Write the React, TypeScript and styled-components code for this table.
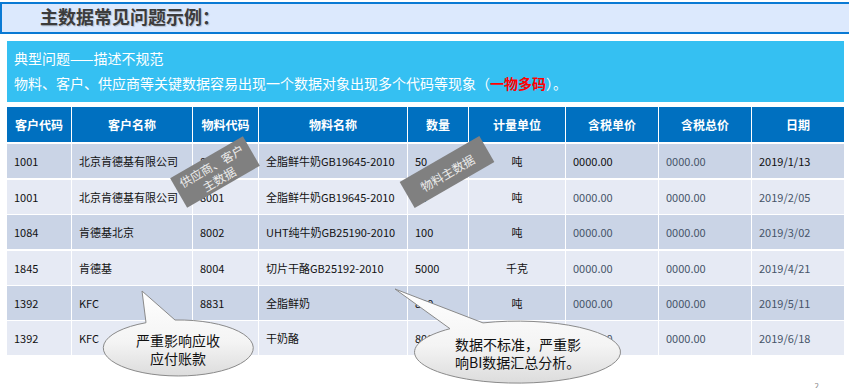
import styled, { createGlobalStyle } from "styled-components";

const GlobalStyle = createGlobalStyle`
  html, body {
    margin: 0;
    padding: 0;
    background: #ffffff;
  }
  body {
    font-family: "Noto Sans CJK SC", "Noto Sans", sans-serif;
  }
`;

type Row = {
  cells: string[];
  // indexes of cells drawn in the muted grey-blue
  muted: number[];
};

const headers = [
  "客户代码",
  "客户名称",
  "物料代码",
  "物料名称",
  "数量",
  "计量单位",
  "含税单价",
  "含税总价",
  "日期",
];

const rows: Row[] = [
  {
    cells: ["1001", "北京肯德基有限公司", "8001", "全脂鲜牛奶GB19645-2010", "50", "吨", "0000.00", "0000.00", "2019/1/13"],
    muted: [7],
  },
  {
    cells: ["1001", "北京肯德基有限公司", "8001", "全脂鲜牛奶GB19645-2010", "50", "吨", "0000.00", "0000.00", "2019/2/05"],
    muted: [6, 7, 8],
  },
  {
    cells: ["1084", "肯德基北京", "8002", "UHT纯牛奶GB25190-2010", "100", "吨", "0000.00", "0000.00", "2019/3/02"],
    muted: [6, 7, 8],
  },
  {
    cells: ["1845", "肯德基", "8004", "切片干酪GB25192-2010", "5000", "千克", "0000.00", "0000.00", "2019/4/21"],
    muted: [6, 7, 8],
  },
  {
    cells: ["1392", "KFC", "8831", "全脂鲜奶", "800", "吨", "0000.00", "0000.00", "2019/5/11"],
    muted: [6, 7, 8],
  },
  {
    cells: ["1392", "KFC", "8832", "干奶酪", "800", "千克", "0000.00", "0000.00", "2019/6/18"],
    muted: [6, 7, 8],
  },
];

const App = () => {
  return (
    <>
      <GlobalStyle />
      <Page>
        <TitleBar>主数据常见问题示例：</TitleBar>
        <Content>
          <InfoPanel>
            <InfoLine>典型问题——描述不规范</InfoLine>
            <InfoLine>
              物料、客户、供应商等关键数据容易出现一个数据对象出现多个代码等现象（
              <Highlight>一物多码</Highlight>）。
            </InfoLine>
          </InfoPanel>
          <Table>
            {headers.map((h) => (
              <HeadCell key={h}>{h}</HeadCell>
            ))}
            {rows.map((row, r) =>
              row.cells.map((c, i) => (
                <BodyCell
                  key={r + "-" + i}
                  $odd={r % 2 === 0}
                  $center={i === 5}
                  $muted={row.muted.includes(i)}
                  $last={r === rows.length - 1}
                >
                  {c}
                </BodyCell>
              ))
            )}
          </Table>
        </Content>

        <Tag $x={215} $y={172} $w={84} $h={34}>
          供应商、客户
          <br />
          主数据
        </Tag>
        <Tag $x={447} $y={172} $w={92} $h={30}>
          物料主数据
        </Tag>

        <Bubbles width="849" height="388" viewBox="0 0 849 388">
          <defs>
            <linearGradient id="bubbleFill" x1="0" y1="0" x2="0" y2="1">
              <stop offset="0" stopColor="#ffffff" />
              <stop offset="0.6" stopColor="#f4f4f4" />
              <stop offset="1" stopColor="#dcdcdc" />
            </linearGradient>
          </defs>
          <path
            d="M146 322.7 L142 291 L175 320 A75 28 0 1 1 146 322.7 Z"
            fill="url(#bubbleFill)"
            stroke="#8a8a8a"
            strokeWidth="1"
          />
          <path
            d="M450 328.7 L395 289 L483 322.9 A103 31 0 1 1 450 328.7 Z"
            fill="url(#bubbleFill)"
            stroke="#8a8a8a"
            strokeWidth="1"
          />
        </Bubbles>

        <BubbleText $x={103} $y={331} $w={150} $center>
          严重影响应收
          <br />
          应付账款
        </BubbleText>
        <BubbleText $x={455} $y={335} $w={160}>
          数据不标准，严重影
          <br />
          响BI数据汇总分析。
        </BubbleText>

        <PageNo>2</PageNo>
      </Page>
    </>
  );
};

const Page = styled.div`
  position: relative;
  width: 849px;
  height: 388px;
  overflow: hidden;
  background: #ffffff;
  padding-top: 2px;
  box-sizing: border-box;
`;

const TitleBar = styled.div`
  height: 28px;
  border-top: 2px solid #0a7ad4;
  border-bottom: 2px solid #0a7ad4;
  border-left: 2px solid #0a7ad4;
  background: #dce9fd;
  padding-left: 38px;
  font-size: 18px;
  font-weight: 700;
  line-height: 24px;
  color: #3c3c3c;
  text-shadow: 1px 1px 1px rgba(0, 0, 0, 0.18);
`;

const Content = styled.div`
  padding: 7px 5px 0 7px;
`;

const InfoPanel = styled.div`
  height: 61px;
  box-sizing: border-box;
  background: #35c0f2;
  padding: 5px 7px;
  color: #ffffff;
  font-size: 14px;
  line-height: 25px;
`;

const InfoLine = styled.div`
  white-space: nowrap;
`;

const Highlight = styled.span`
  color: #ff0000;
  font-weight: 700;
`;

const Table = styled.div`
  display: grid;
  grid-template-columns: 64px 120px 65px 148px 60px 96px 92px 92px 92px;
  grid-template-rows: 36px repeat(6, 34px);
  column-gap: 1px;
  row-gap: 1.4px;
  margin-top: 5px;
  width: 837px;
  background: #ffffff;
`;

const HeadCell = styled.div`
  display: flex;
  align-items: center;
  justify-content: center;
  background: #0070c0;
  color: #ffffff;
  font-size: 12px;
  font-weight: 700;
  margin-bottom: 1px;
`;

const BodyCell = styled.div<{
  $odd: boolean;
  $center: boolean;
  $muted: boolean;
  $last: boolean;
}>`
  display: flex;
  align-items: center;
  justify-content: ${(p) => (p.$center ? "center" : "flex-start")};
  padding-left: ${(p) => (p.$center ? "0" : "7px")};
  background: ${(p) => (p.$odd ? "#cad4e6" : "#e6eaf4")};
  color: ${(p) => (p.$muted ? "#475569" : "#111111")};
  font-size: 11px;
  white-space: nowrap;
  overflow: hidden;
`;

const Tag = styled.div<{ $x: number; $y: number; $w: number; $h: number }>`
  position: absolute;
  left: ${(p) => p.$x - p.$w / 2}px;
  top: ${(p) => p.$y - p.$h / 2}px;
  width: ${(p) => p.$w}px;
  height: ${(p) => p.$h}px;
  transform: rotate(-30deg);
  background: #808080;
  color: #ececec;
  font-size: 12px;
  line-height: 15px;
  display: flex;
  align-items: center;
  justify-content: center;
  text-align: center;
`;

const Bubbles = styled.svg`
  position: absolute;
  left: 0;
  top: 0;
  pointer-events: none;
`;

const BubbleText = styled.div<{ $x: number; $y: number; $w: number; $center?: boolean }>`
  position: absolute;
  left: ${(p) => p.$x}px;
  top: ${(p) => p.$y}px;
  width: ${(p) => p.$w}px;
  text-align: ${(p) => (p.$center ? "center" : "left")};
  font-size: 14px;
  line-height: 18px;
  color: #111111;
`;

const PageNo = styled.div`
  position: absolute;
  right: 30px;
  bottom: -3px;
  font-size: 8px;
  color: #8a8a8a;
`;

export default App;
